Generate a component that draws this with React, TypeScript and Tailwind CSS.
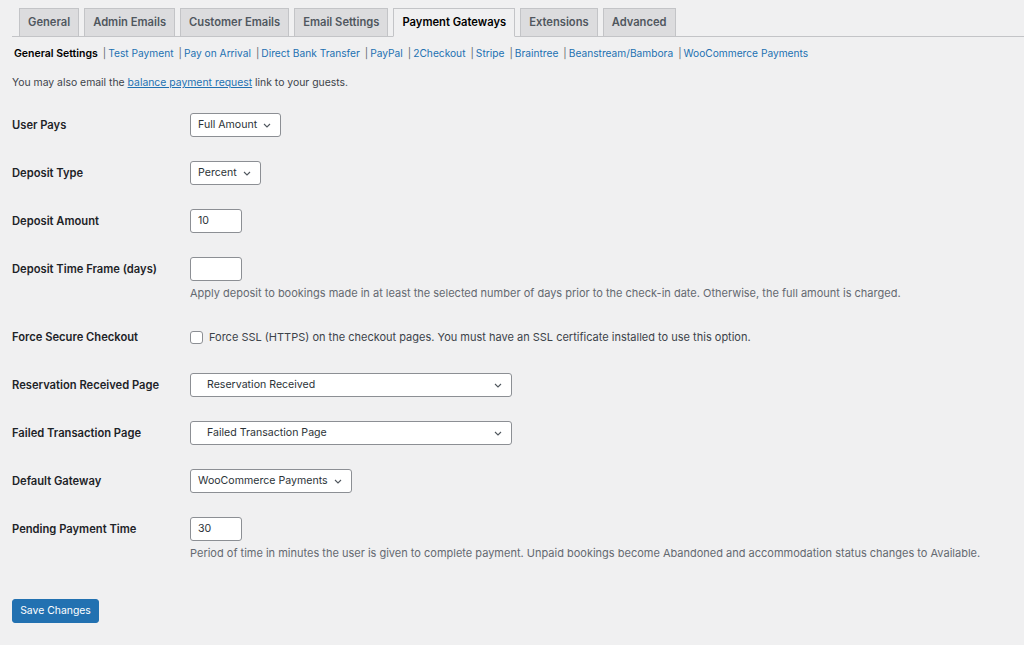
import { ReactNode } from "react";

const tabs = [
  "General",
  "Admin Emails",
  "Customer Emails",
  "Email Settings",
  "Payment Gateways",
  "Extensions",
  "Advanced",
];

const gateways = [
  "Test Payment",
  "Pay on Arrival",
  "Direct Bank Transfer",
  "PayPal",
  "2Checkout",
  "Stripe",
  "Braintree",
  "Beanstream/Bambora",
  "WooCommerce Payments",
];

function Chevron() {
  return (
    <svg width="8" height="5" viewBox="0 0 8 5" className="shrink-0">
      <path d="M1 1l3 3 3-3" fill="none" stroke="#50575e" strokeWidth="1.1" />
    </svg>
  );
}

function Select({ value, wide }: { value: string; wide?: boolean }) {
  if (wide) {
    return (
      <div className="flex h-[24px] w-[322px] items-center justify-between rounded-[3px] border border-[#8c8f94] bg-white pl-[16px] pr-[9px] text-[10.6px] text-[#2c3338]">
        <span>{value}</span>
        <Chevron />
      </div>
    );
  }
  return (
    <div className="flex h-[24px] w-fit items-center gap-[6px] rounded-[3px] border border-[#8c8f94] bg-white pl-[7px] pr-[9px] text-[10.6px] text-[#2c3338]">
      <span>{value}</span>
      <Chevron />
    </div>
  );
}

function TextInput({ value }: { value?: string }) {
  return (
    <div className="flex h-[24px] w-[52px] items-center rounded-[3px] border border-[#8c8f94] bg-white px-[7px] text-[10.6px] text-[#2c3338]">
      {value}
    </div>
  );
}

function Row({
  label,
  children,
  note,
}: {
  label: string;
  children: ReactNode;
  note?: string;
}) {
  return (
    <div className="flex">
      <div className="flex h-[24px] w-[178px] shrink-0 items-center text-[11.2px] font-semibold text-[#1d2327]">
        {label}
      </div>
      <div className="flex flex-col">
        {children}
        {note && (
          <p className="mt-[5px] text-[11px] leading-[15px] text-[#646970]">
            {note}
          </p>
        )}
      </div>
    </div>
  );
}

export default function App() {
  return (
    <div className="min-h-screen bg-[#f0f0f1] pl-3 font-['Inter','Liberation_Sans',sans-serif] text-[#3c434a]">
      <nav className="flex gap-[5px] border-b border-[#c3c4c7] pl-[7px] pt-[8px]">
        {tabs.map((tab) => {
          const active = tab === "Payment Gateways";
          return (
            <div
              key={tab}
              className={
                active
                  ? "-mb-px flex h-[29px] items-center border border-[#c3c4c7] border-b-[#f0f0f1] bg-[#f0f0f1] px-[8px] text-[11.2px] font-semibold text-black"
                  : "-mb-px flex h-[29px] items-center border border-[#c3c4c7] bg-[#dcdcde] px-[8px] text-[11.2px] font-semibold text-[#50575e]"
              }
            >
              {tab}
            </div>
          );
        })}
      </nav>

      <ul className="mt-[9px] flex pl-[2px] text-[10.2px] leading-[15px] text-[#646970]">
        <li className="text-[10.5px] font-semibold text-black">
          General Settings
        </li>
        {gateways.map((g) => (
          <li key={g} className="flex">
            <span className="ml-[5px] mr-[2px]">|</span>
            <a className="text-[#2271b1]">{g}</a>
          </li>
        ))}
      </ul>

      <p className="mt-[14px] text-[10.4px] leading-[15px]">
        You may also email the{" "}
        <a className="text-[#2271b1] underline">balance payment request</a> link
        to your guests.
      </p>

      <form className="mt-[23px] flex flex-col gap-[24px]">
        <Row label="User Pays">
          <Select value="Full Amount" />
        </Row>
        <Row label="Deposit Type">
          <Select value="Percent" />
        </Row>
        <Row label="Deposit Amount">
          <TextInput value="10" />
        </Row>
        <Row
          label="Deposit Time Frame (days)"
          note="Apply deposit to bookings made in at least the selected number of days prior to the check-in date. Otherwise, the full amount is charged."
        >
          <TextInput />
        </Row>
        <Row label="Force Secure Checkout">
          <label className="flex h-[24px] items-center gap-[6px] text-[11px] text-[#3c434a]">
            <span className="h-[13px] w-[13px] rounded-[3px] border border-[#8c8f94] bg-white" />
            Force SSL (HTTPS) on the checkout pages. You must have an SSL
            certificate installed to use this option.
          </label>
        </Row>
        <Row label="Reservation Received Page">
          <Select value="Reservation Received" wide />
        </Row>
        <Row label="Failed Transaction Page">
          <Select value="Failed Transaction Page" wide />
        </Row>
        <Row label="Default Gateway">
          <Select value="WooCommerce Payments" />
        </Row>
        <Row
          label="Pending Payment Time"
          note="Period of time in minutes the user is given to complete payment. Unpaid bookings become Abandoned and accommodation status changes to Available."
        >
          <TextInput value="30" />
        </Row>
      </form>

      <button className="mt-[38px] h-[24px] w-[87px] rounded-[3px] border border-[#2271b1] bg-[#2271b1] text-[10.4px] text-white">
        Save Changes
      </button>
    </div>
  );
}
